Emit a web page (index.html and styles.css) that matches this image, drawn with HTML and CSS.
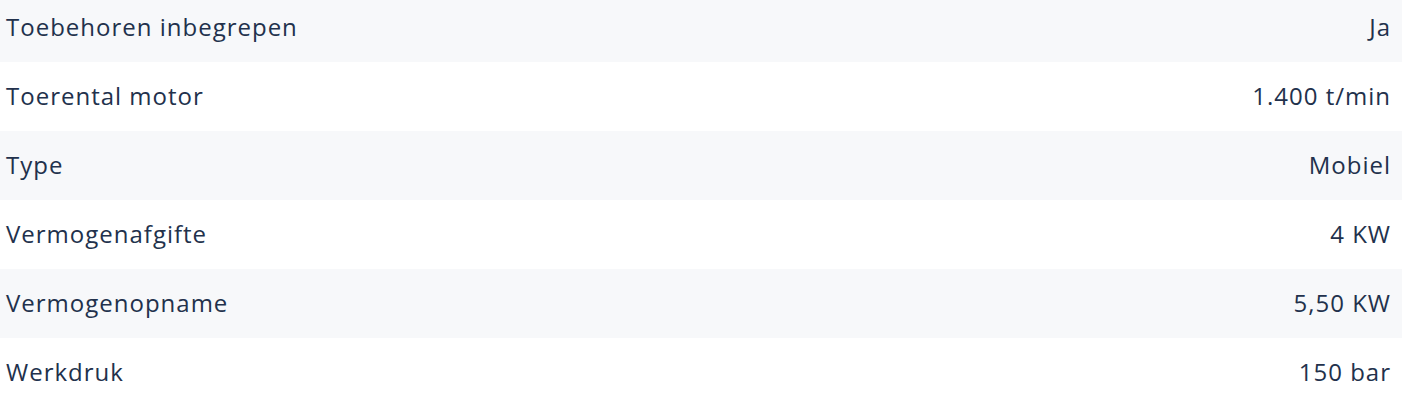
FILE: index.html
```
<!DOCTYPE html>
<html lang="nl">
<head>
    <meta charset="UTF-8">
    <meta name="viewport" content="width=device-width, initial-scale=1.0">
    <title>Specificaties</title>
    <link rel="stylesheet" href="styles.css">
</head>
<body>
    <div class="specs">
        <div class="spec-row">
            <span class="spec-label">Toebehoren inbegrepen</span>
            <span class="spec-value">Ja</span>
        </div>
        <div class="spec-row">
            <span class="spec-label">Toerental motor</span>
            <span class="spec-value">1.400 t/min</span>
        </div>
        <div class="spec-row">
            <span class="spec-label">Type</span>
            <span class="spec-value">Mobiel</span>
        </div>
        <div class="spec-row">
            <span class="spec-label">Vermogenafgifte</span>
            <span class="spec-value">4 KW</span>
        </div>
        <div class="spec-row">
            <span class="spec-label">Vermogenopname</span>
            <span class="spec-value">5,50 KW</span>
        </div>
        <div class="spec-row">
            <span class="spec-label">Werkdruk</span>
            <span class="spec-value">150 bar</span>
        </div>
    </div>
</body>
</html>
```

FILE: styles.css
```
/* General Styles */
body {
    margin: 0;
    padding: 0;
    background-color: #fff;
    font-family: "Open Sans", Arial, sans-serif;
    color: #22314c;
}

.specs {
    margin-top: -7px;
}

.spec-row {
    display: flex;
    justify-content: space-between;
    align-items: center;
    height: 69px;
    padding: 0 11px 0 6px;
    box-sizing: border-box;
    font-size: 24px;
    line-height: 1.2;
    letter-spacing: 1px;
}

.spec-row:nth-child(odd) {
    background-color: #f7f8fa;
}
```
